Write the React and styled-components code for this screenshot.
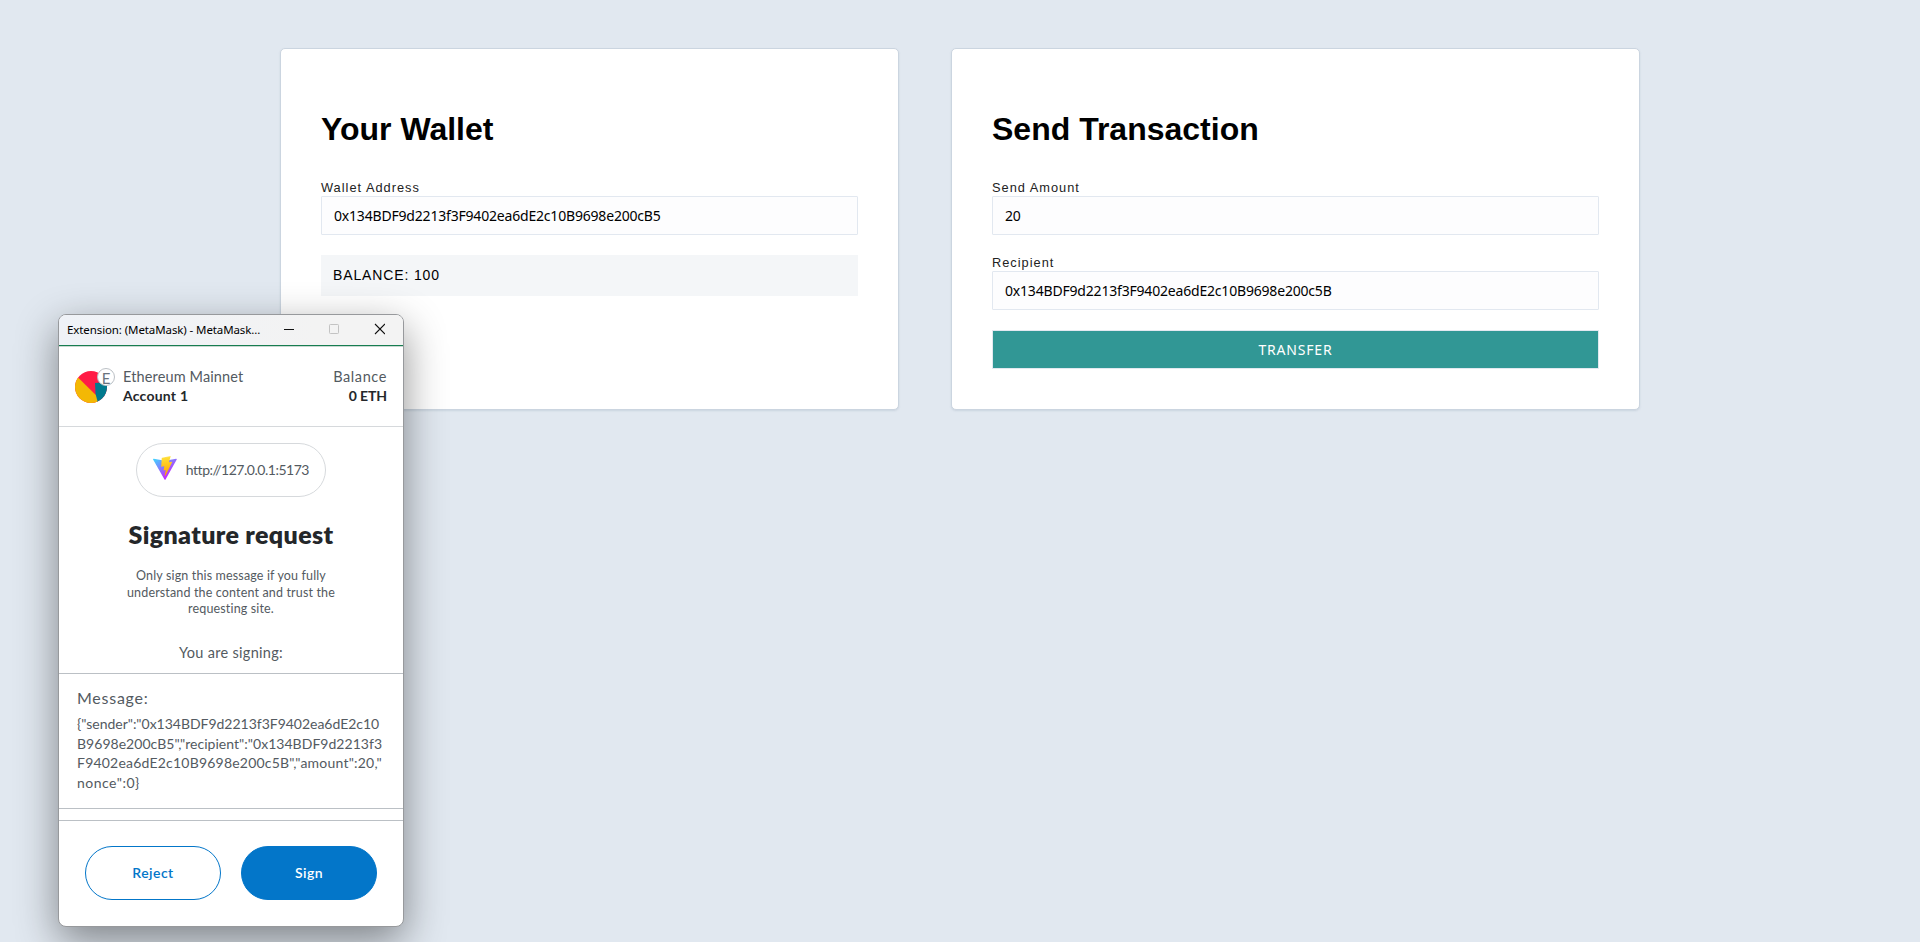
import React from "react";
import styled, { createGlobalStyle } from "styled-components";

const GlobalStyle = createGlobalStyle`
  *, *::before, *::after { box-sizing: border-box; }
  body {
    margin: 0;
    min-height: 942px;
    overflow: hidden;
    background: #e1e8f0;
    font-family: "Liberation Sans", Arial, sans-serif;
    color: #000;
  }
`;

const Page = styled.main`
  position: relative;
  height: 942px;
  overflow: hidden;
  padding: 48px 280px 0;
`;

const Columns = styled.div`
  display: grid;
  grid-template-columns: 619px 689px;
  column-gap: 52px;
`;

const Card = styled.section`
  height: 362px;
  padding: 40px;
  background: #fff;
  border: 1px solid #cbd5e0;
  border-radius: 5px;
  box-shadow: 0 1px 2px rgba(160, 174, 192, 0.35);
`;

const Heading = styled.h1`
  margin: 22px 0 32px;
  font-size: 32px;
  line-height: 37px;
`;

const Field = styled.label`
  display: block;
  margin-bottom: 20px;
  font-size: 12.8px;
  line-height: 16px;
  letter-spacing: 1px;
  color: #222;
`;

const Input = styled.input`
  display: block;
  width: 100%;
  height: 39px;
  padding: 0 12px;
  border: 1px solid #e2e8f0;
  border-radius: 1px;
  outline: none;
  background: #fdfdfe;
  color: #000;
  font: 14px "Noto Sans", Tahoma, sans-serif;
  letter-spacing: -0.19px;
`;

const BalanceBar = styled.div`
  height: 41px;
  padding: 0 12px;
  background: #f4f6f8;
  font-size: 14px;
  line-height: 41px;
  letter-spacing: 0.87px;
`;

const TransferButton = styled.button`
  display: block;
  width: 100%;
  height: 39px;
  padding: 0;
  border: 1px solid #e2e8f0;
  background: #319795;
  color: #fff;
  font: 14px "Noto Sans", Tahoma, sans-serif;
  letter-spacing: 0.8px;
`;

const Popup = styled.aside`
  position: absolute;
  left: 58px;
  top: 314px;
  width: 346px;
  height: 613px;
  display: flex;
  flex-direction: column;
  overflow: hidden;
  border: 1px solid #97999c;
  border-radius: 8px;
  background: #fff;
  color: #535a61;
  font-family: Lato, sans-serif;
  box-shadow: 0 14px 42px rgba(0, 0, 0, 0.44);
`;

const TitleBar = styled.div`
  display: flex;
  align-items: center;
  flex: none;
  height: 32px;
  padding: 0 18px 2px 8px;
  background: linear-gradient(90deg, #eff2f7, #f3f3f3 75%);
  border-bottom: 1px solid #c9d8d1;
  box-shadow: inset 0 -1px 0 #177d50;
`;

const WindowTitle = styled.span`
  flex: 1;
  white-space: nowrap;
  color: #000;
  font: 11.5px "Noto Sans", "Segoe UI", sans-serif;
  letter-spacing: -0.1px;
`;

const WindowControls = styled.svg`
  width: 102px;
  height: 12px;
  margin-top: -1px;
`;

const Header = styled.header`
  display: flex;
  flex: none;
  height: 80px;
  padding: 20px 16px 0;
  border-bottom: 1px solid #d6d9dc;
`;

const AvatarBox = styled.div`
  position: relative;
  width: 32px;
  height: 32px;
  margin: 4px 16px 0 0;
`;

const Badge = styled.span`
  position: absolute;
  left: 22px;
  top: -3px;
  width: 18px;
  height: 18px;
  border: 1px solid #bbc0c5;
  border-radius: 50%;
  background: #fff;
  color: #6a737d;
  font-size: 15px;
  line-height: 18px;
  text-align: center;
`;

const AccountInfo = styled.div`
  display: flex;
  flex-direction: column;
  align-items: ${(p) => (p.$end ? "flex-end" : "flex-start")};
  margin-left: ${(p) => (p.$end ? "auto" : "0")};
  font-size: 14px;
  line-height: 19px;
`;

const Caption = styled.span`
  font-size: 14.5px;
  letter-spacing: ${(p) => p.$spacing};
`;

const Strong = styled.strong`
  color: #24272a;
  font-weight: 700;
  letter-spacing: ${(p) => p.$spacing};
`;

const Content = styled.div`
  display: flex;
  flex-direction: column;
  align-items: center;
  flex: none;
  height: 246px;
  padding-top: 16px;
`;

const SitePill = styled.div`
  display: flex;
  align-items: center;
  width: 190px;
  height: 54px;
  padding: 0 16px 1px;
  border: 1px solid #d6d9dc;
  border-radius: 27px;
  font-size: 14px;
  letter-spacing: -0.48px;
`;

const ViteLogo = styled.svg`
  width: 24px;
  height: 24px;
  margin: -3px 9px 0 0;
`;

const RequestTitle = styled.h3`
  margin: 20px 0 17px;
  color: #24272a;
  font-size: 25px;
  font-weight: 800;
  line-height: 34px;
  letter-spacing: 0.35px;
`;

const Hint = styled.p`
  width: 230px;
  margin: 0 0 25px;
  font-size: 12.5px;
  line-height: 16.6px;
  letter-spacing: 0.15px;
  text-align: center;
`;

const Signing = styled.div`
  font-size: 14.5px;
  line-height: 20px;
  letter-spacing: 0.3px;
`;

const MessageBox = styled.section`
  flex: none;
  height: 136px;
  padding: 13px 18px 0;
  border: solid #bbc0c5;
  border-width: 1px 0;
`;

const MessageLabel = styled.div`
  margin-bottom: 5px;
  font-size: 16px;
  line-height: 22px;
  letter-spacing: 0.75px;
`;

const MessageLine = styled.div`
  font-size: 14px;
  line-height: 19.5px;
  white-space: nowrap;
  letter-spacing: ${(p) => p.$spacing};
`;

const Footer = styled.footer`
  display: flex;
  gap: 20px;
  flex: 1;
  margin-top: 11px;
  padding: 25px 26px 0;
  border-top: 1px solid #bbc0c5;
`;

const ActionButton = styled.button`
  width: 136px;
  height: 54px;
  padding: 0 0 2px;
  border: 1px solid #0376c9;
  border-radius: 27px;
  background: ${(p) => (p.$primary ? "#0376c9" : "#fff")};
  color: ${(p) => (p.$primary ? "#fff" : "#0376c9")};
  font: 600 14px Lato, sans-serif;
  letter-spacing: 0.45px;
`;

const messageLines = [
  ['{"sender":"0x134BDF9d2213f3F9402ea6dE2c10', "-0.02px"],
  ['B9698e200cB5","recipient":"0x134BDF9d2213f3', "0.03px"],
  ['F9402ea6dE2c10B9698e200c5B","amount":20,"', "0.21px"],
  ['nonce":0}', "0.5px"],
];

function Avatar() {
  return (
    <AvatarBox>
      <svg width="32" height="32" viewBox="0 0 32 32">
        <clipPath id="avatar"><circle cx="16" cy="16" r="16" /></clipPath>
        <g clipPath="url(#avatar)">
          <rect width="32" height="32" fill="#ff1c46" />
          <path d="M20 12 32 11V32H21Z" fill="#017a8e" />
          <path d="M0 3.5 20.8 24 23 32H0Z" fill="#f3b804" />
        </g>
      </svg>
      <Badge>E</Badge>
    </AvatarBox>
  );
}

function Vite() {
  return (
    <ViteLogo viewBox="0 0 256 257">
      <defs>
        <linearGradient id="triangle" x1="-.828%" x2="57.636%" y1="7.652%" y2="78.411%">
          <stop offset="0%" stopColor="#41D1FF" />
          <stop offset="100%" stopColor="#BD34FE" />
        </linearGradient>
        <linearGradient id="bolt" x1="43.376%" x2="50.316%" y1="2.242%" y2="89.03%">
          <stop offset="0%" stopColor="#FFEA83" />
          <stop offset="8.333%" stopColor="#FFDD35" />
          <stop offset="100%" stopColor="#FFA800" />
        </linearGradient>
      </defs>
      <path fill="url(#triangle)" d="M255.153 37.938 134.897 252.976c-2.483 4.44-8.862 4.466-11.382.048L.875 37.958c-2.746-4.814 1.371-10.646 6.827-9.67l120.385 21.517a6.537 6.537 0 0 0 2.322-.004l117.867-21.483c5.438-.991 9.574 4.796 6.877 9.62Z" />
      <path fill="url(#bolt)" d="M185.432.063 96.44 17.501a3.268 3.268 0 0 0-2.634 3.014l-5.474 92.456a3.268 3.268 0 0 0 3.997 3.378l24.777-5.718c2.318-.535 4.413 1.507 3.936 3.838l-7.361 36.047c-.495 2.426 1.782 4.5 4.151 3.78l15.304-4.649c2.372-.72 4.652 1.36 4.15 3.788l-11.698 56.621c-.732 3.542 3.979 5.473 5.943 2.437l1.313-2.028 72.516-144.72c1.215-2.423-.88-5.186-3.54-4.672l-25.505 4.922c-2.396.462-4.435-1.77-3.759-4.114l16.646-57.705c.677-2.35-1.37-4.583-3.769-4.113Z" />
    </ViteLogo>
  );
}

export default function App() {
  return (
    <Page>
      <GlobalStyle />
      <Columns>
        <Card>
          <Heading>Your Wallet</Heading>
          <Field>
            Wallet Address
            <Input readOnly value="0x134BDF9d2213f3F9402ea6dE2c10B9698e200cB5" />
          </Field>
          <BalanceBar>BALANCE: 100</BalanceBar>
        </Card>
        <Card>
          <Heading>Send Transaction</Heading>
          <Field>
            Send Amount
            <Input readOnly value="20" />
          </Field>
          <Field>
            Recipient
            <Input readOnly value="0x134BDF9d2213f3F9402ea6dE2c10B9698e200c5B" />
          </Field>
          <TransferButton>TRANSFER</TransferButton>
        </Card>
      </Columns>

      <Popup>
        <TitleBar>
          <WindowTitle>Extension: (MetaMask) - MetaMask...</WindowTitle>
          <WindowControls viewBox="0 0 102 12" fill="none">
            <path d="M1 6.5H11" stroke="#111" />
            <rect x="46.5" y="1.5" width="9" height="9" rx=".8" stroke="#c3c3c3" />
            <path d="m92 1 10 10M102 1 92 11" stroke="#111" strokeWidth="1.1" />
          </WindowControls>
        </TitleBar>
        <Header>
          <Avatar />
          <AccountInfo>
            <Caption $spacing="0.13px">Ethereum Mainnet</Caption>
            <Strong $spacing="0.22px">Account 1</Strong>
          </AccountInfo>
          <AccountInfo $end>
            <Caption $spacing="0.6px">Balance</Caption>
            <Strong $spacing="-0.1px">0 ETH</Strong>
          </AccountInfo>
        </Header>
        <Content>
          <SitePill>
            <Vite />
            http://127.0.0.1:5173
          </SitePill>
          <RequestTitle>Signature request</RequestTitle>
          <Hint>
            Only sign this message if you fully
            <br />
            understand the content and trust the
            <br />
            requesting site.
          </Hint>
          <Signing>You are signing:</Signing>
        </Content>
        <MessageBox>
          <MessageLabel>Message:</MessageLabel>
          {messageLines.map(([text, spacing]) => (
            <MessageLine key={text} $spacing={spacing}>{text}</MessageLine>
          ))}
        </MessageBox>
        <Footer>
          <ActionButton>Reject</ActionButton>
          <ActionButton $primary>Sign</ActionButton>
        </Footer>
      </Popup>
    </Page>
  );
}
